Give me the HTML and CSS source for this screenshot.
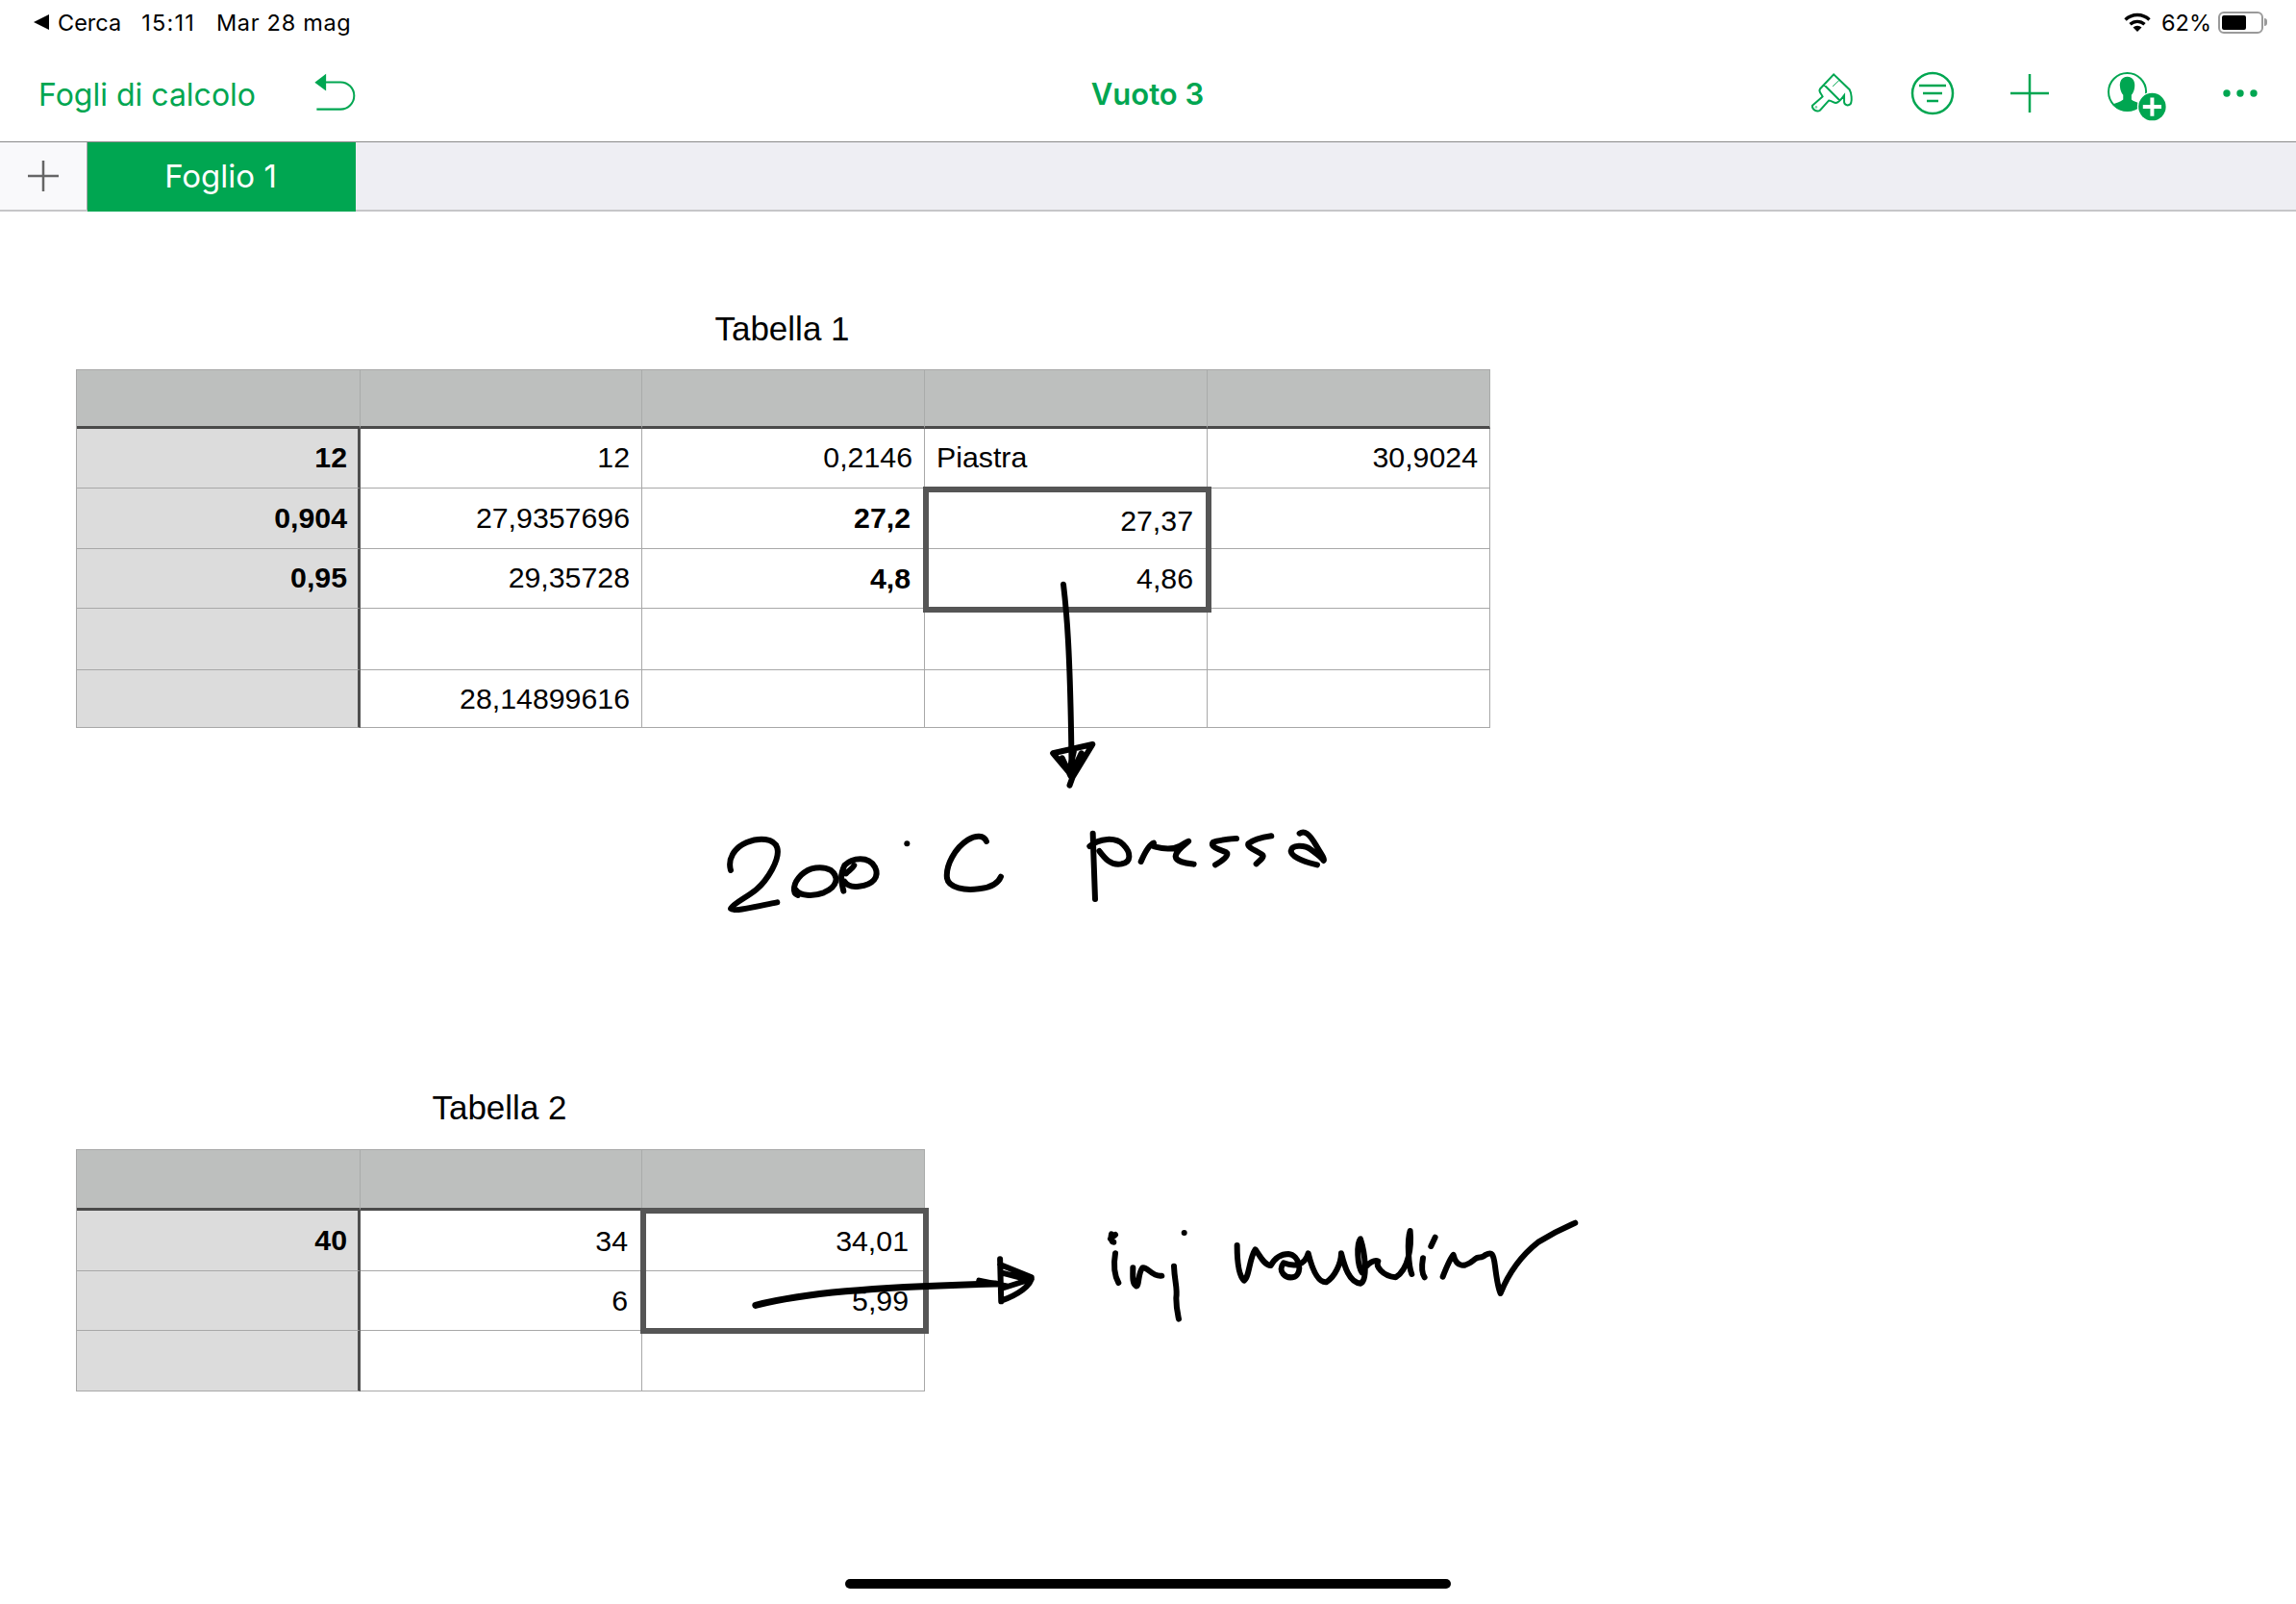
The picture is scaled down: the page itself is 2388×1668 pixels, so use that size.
FILE: index.html
```html
<!DOCTYPE html>
<html lang="it">
<head>
<meta charset="utf-8">
<title>Vuoto 3</title>
<link rel="stylesheet" href="styles.css">
</head>
<body>
<div class="status">
  <div class="status-left">
    <svg class="back-tri" viewBox="0 0 16 16"><path d="M16 0V16L0 8Z"/></svg>
    <span class="s-cerca">Cerca</span>
    <span class="s-time">15:11</span>
    <span class="s-date">Mar 28 mag</span>
  </div>
  <div class="status-right">
    <svg class="wifi" viewBox="0 0 28 20"><path class="wifi-arc" d="M1.5 7.5A18 18 0 0 1 26.5 7.5M6.5 12.3A11 11 0 0 1 21.500 12.300"/><path class="wifi-fill" d="M14 20L9.500 15.500A6.500 6.500 0 0 1 18.500 15.500Z"/></svg>
    <span class="s-pct">62%</span>
    <div class="battery"><div class="battery-body"><div class="battery-fill"></div></div><div class="battery-nub"></div></div>
  </div>
</div>

<header class="nav">
  <div class="nav-left">
    <span class="nav-link">Fogli di calcolo</span>
    <svg class="i-undo" viewBox="975 230 140 125"><path class="g-fill" d="M1017 235L982 262L1017 288Z"/><path class="g-line6" d="M1010 261H1062A42 42 0 0 1 1062 345H988"/></svg>
  </div>
  <div class="nav-title">Vuoto 3</div>
  <div class="nav-right">
    <svg class="i-brush" viewBox="40 45 140 130"><path class="g-line6" d="M72 98L115 52L165 100C172 112 172 135 170 140C168 152 150 152 148 140L148 118C140 128 132 140 122 142C115 142 108 134 100 134L72 165C62 172 46 162 48 150L80 122C76 112 66 105 72 98ZM85 85L135 135"/><path class="g-line3" d="M112 90L135 68"/><circle class="g-dot" cx="60" cy="155" r="4"/></svg>
    <svg class="i-filter" viewBox="0 0 46 46"><circle class="g-line2" cx="23" cy="23" r="21"/><path class="g-line2" d="M9 15H37M13 23H33M17 31H29"/></svg>
    <svg class="i-plus" viewBox="0 0 40 40"><path class="g-line2" d="M20 0V40M0 20H40"/></svg>
    <svg class="i-person" viewBox="60 40 190 160"><circle class="g-line6" cx="125" cy="108" r="59"/><path class="g-fill" d="M125 60C143 60 150 76 148 92C147 104 143 112 138 118V132C150 142 172 145 174 146C160 160 142 168 125 168C108 168 92 162 78 148C90 142 102 140 112 132V118C107 112 103 104 102 92C100 76 107 60 125 60Z"/><circle class="g-white" cx="203" cy="155" r="47"/><circle class="g-fill" cx="203" cy="155" r="43"/><path class="g-plus-w" d="M203 126V184M174 155H232"/></svg>
    <svg class="i-dots" viewBox="0 0 36 8"><circle class="g-fill" cx="4" cy="4" r="3.700"/><circle class="g-fill" cx="18" cy="4" r="3.700"/><circle class="g-fill" cx="32" cy="4" r="3.700"/></svg>
  </div>
</header>

<nav class="tabs">
  <div class="tab-add"><svg class="i-tabplus" viewBox="0 0 32 32"><path d="M16 0V32M0 16H32"/></svg></div>
  <div class="tab-active">Foglio 1</div>
</nav>

<main class="sheet">
  <section class="block block-1">
    <h2 class="tbl-title">Tabella 1</h2>
    <div class="grid grid-1">
      <div class="c h"></div><div class="c h"></div><div class="c h"></div><div class="c h"></div><div class="c h"></div>
      <div class="c rh">12</div><div class="c">12</div><div class="c">0,2146</div><div class="c left">Piastra</div><div class="c">30,9024</div>
      <div class="c rh">0,904</div><div class="c">27,9357696</div><div class="c b pad16">27,2</div><div class="c pad16 low">27,37</div><div class="c"></div>
      <div class="c rh">0,95</div><div class="c">29,35728</div><div class="c b pad16 low3">4,8</div><div class="c pad16 low3">4,86</div><div class="c"></div>
      <div class="c rh"></div><div class="c"></div><div class="c"></div><div class="c"></div><div class="c"></div>
      <div class="c rh"></div><div class="c low3">28,14899616</div><div class="c"></div><div class="c"></div><div class="c"></div>
      <div class="sel sel-1"></div>
    </div>
  </section>
  <section class="block block-2">
    <h2 class="tbl-title">Tabella 2</h2>
    <div class="grid grid-2">
      <div class="c h"></div><div class="c h"></div><div class="c h"></div>
      <div class="c rh">40</div><div class="c pad16 low2">34</div><div class="c pad17 low2">34,01</div>
      <div class="c rh"></div><div class="c pad16 low2">6</div><div class="c pad17 low2">5,99</div>
      <div class="c rh"></div><div class="c"></div><div class="c"></div>
      <div class="sel sel-2"></div>
    </div>
  </section>
</main>

<div class="home-wrap"><div class="home"></div></div>

<svg class="ink-layer" viewBox="0 0 2388 1668" role="img" aria-label="Appunti a mano: 200 °C pressa, inj moulding">
  <g transform="translate(900 420) scale(.4337 .3333)">
    <path class="ink" d="M475 563C482 640 492 760 495 1165"/>
    <path class="ink" d="M495 1160L450 1090L545 1062L497 1165L490 1190M472 1105L492 1160M518 1090L492 1160M500 1085L490 1140"/>
  </g>
  <g transform="translate(760 1240) scale(.574 .3333)">
    <path class="ink ink-heavy" d="M45 352C130 315 250 295 480 285"/>
    <path class="ink" d="M488 208L490 340M488 225L545 265C545 290 520 320 490 338M490 300L545 270M450 275L500 292M490 250L530 268"/>
  </g>
  <g transform="translate(740 850) scale(.3333)">
    <path class="ink" d="M60 165C50 130 70 95 110 78C150 62 195 65 205 95C215 130 175 195 140 225C110 250 65 270 60 285C70 295 130 280 205 265"/>
    <path class="ink" d="M270 243C250 235 255 205 280 180C305 155 345 150 372 165C398 185 395 215 350 235C315 248 275 245 262 225"/>
    <path class="ink" d="M412 230C405 200 400 180 415 150C440 125 490 120 510 155C525 185 505 210 460 215C440 218 425 215 415 200M420 175C430 165 440 160 445 150"/>
    <path class="ink" d="M610 82h.1"/>
    <path class="ink" d="M858 75C850 55 825 55 800 70C760 95 730 150 735 190C740 220 790 230 840 222C875 218 895 205 903 185"/>
  </g>
  <g transform="translate(1120 850) scale(.3333)">
    <path class="ink" d="M50 50C52 120 55 200 57 255"/>
    <path class="ink" d="M40 90C70 65 120 60 145 85C170 110 170 140 140 145C105 152 85 125 70 105"/>
    <path class="ink" d="M200 138C210 115 225 85 240 80C240 90 235 90 245 92C275 100 300 100 320 90C345 75 355 70 345 78C330 90 310 105 308 122C310 140 340 143 365 146"/>
    <path class="ink" d="M498 66C470 68 440 70 425 78C415 90 440 100 465 108C480 118 450 138 432 148"/>
    <path class="ink" d="M607 58C580 62 550 70 535 82C530 95 565 105 580 118C585 125 570 135 560 145"/>
    <path class="ink" d="M695 50C710 40 725 50 745 85C760 110 775 130 770 135C765 125 745 112 730 100C710 85 670 85 668 105C670 125 715 140 750 148"/>
  </g>
  <g transform="translate(1140 1260) scale(.3333)">
    <path class="ink" d="M48 70C45 80 48 95 55 95M60 72L45 85"/>
    <path class="ink" d="M60 130C55 160 55 195 70 222"/>
    <path class="ink" d="M115 175C115 200 112 225 125 232C135 235 130 190 145 175C160 170 175 205 205 200"/>
    <path class="ink" d="M275 66h.1"/>
    <path class="ink" d="M243 170C245 220 255 240 250 270C250 300 255 320 258 335"/>
    <path class="ink" d="M440 105C440 150 445 200 462 215C478 205 478 145 497 118C510 135 525 168 545 168C555 150 572 132 600 132C635 135 645 190 620 203C590 212 565 185 585 160C610 170 650 175 662 130C672 170 690 222 718 220C745 205 765 160 765 130C775 170 790 222 825 224C848 215 840 130 825 85C812 100 815 170 830 190C850 155 872 150 880 155C872 170 892 200 935 205C975 180 985 110 980 60C970 90 975 170 985 195"/>
    <path class="ink" d="M1020 145C1015 175 1018 195 1025 205"/>
    <path class="ink" d="M1058 80L1045 108"/>
    <path class="ink" d="M1082 203C1095 170 1105 145 1115 135C1125 175 1150 175 1180 150C1195 135 1200 150 1215 135C1235 125 1240 130 1245 170C1250 210 1255 240 1262 255C1280 210 1310 150 1380 95C1420 70 1460 50 1495 35"/>
  </g>
</svg>
</body>
</html>
```

FILE: styles.css
```css
* { box-sizing: border-box; }
html, body { margin: 0; padding: 0; }
body {
  position: relative;
  width: 2388px;
  height: 1668px;
  overflow: hidden;
  background: #fff;
  display: flex;
  flex-direction: column;
  font-family: Inter, "Liberation Sans", sans-serif;
  color: #000;
}

/* status bar */
.status {
  height: 46px;
  flex: none;
  display: flex;
  justify-content: space-between;
  align-items: center;
  padding: 0 30px 0 35px;
  font-size: 23.500px;
}
.status-left, .status-right { display: flex; align-items: center; }
.back-tri { width: 16px; height: 16px; margin-right: 9px; }
.s-cerca { margin-right: 21px; }
.s-time { margin-right: 22px; letter-spacing: 1.200px; }
.s-date { letter-spacing: .700px; }
.wifi { width: 28px; height: 20px; margin-right: 11px; }
.wifi-arc { fill: none; stroke: #000; stroke-width: 3.400; }
.wifi-fill { fill: #000; }
.s-pct { margin-right: 7px; }
.battery { display: flex; align-items: center; }
.battery-body {
  width: 47px;
  height: 23px;
  border: 2px solid #9a9a9a;
  border-radius: 6px;
  padding: 2px;
}
.battery-fill { width: 25px; height: 100%; background: #000; border-radius: 2px; }
.battery-nub { width: 3px; height: 8px; background: #9a9a9a; border-radius: 0 3px 3px 0; margin-left: 1px; }

/* nav */
.nav {
  height: 102px;
  flex: none;
  display: grid;
  grid-template-columns: 1fr auto 1fr;
  align-items: center;
  padding: 0 40px 0 40px;
  border-bottom: 1px solid #8a8a8a;
  color: #00a651;
}
.nav-left { display: flex; align-items: center; }
.nav-link { font-size: 32px; width: 285px; padding-top: 3px; }
.nav-title { font-size: 31px; font-weight: 600; padding: 1px 1px 0 0; }
.nav-right { display: flex; justify-content: flex-end; align-items: center; }
.i-undo { width: 47px; height: 42px; margin-top: -2px; }
.i-brush { width: 47px; height: 43px; margin-right: 58px; }
.i-filter { width: 46px; height: 46px; margin-right: 58px; }
.i-plus { width: 40px; height: 40px; margin-right: 60px; }
.i-person { width: 63px; height: 53px; margin-right: 58px; margin-top: 5px; }
.i-dots { width: 36px; height: 8px; }
.g-fill { fill: #00a651; }
.g-dot { fill: #7fd3a8; }
.g-white { fill: #fff; }
.g-line6 { fill: none; stroke: #00a651; stroke-width: 6; }
.g-line3 { fill: none; stroke: #00a651; stroke-width: 3; }
.g-line2 { fill: none; stroke: #00a651; stroke-width: 2.500; }
.g-plus-w { fill: none; stroke: #fff; stroke-width: 12; }

/* tabs */
.tabs {
  height: 72px;
  flex: none;
  display: flex;
  background: #eeeef3;
  border-bottom: 2px solid #c6c6c8;
}
.tab-add {
  width: 91px;
  background: #f9f9fb;
  border-right: 1px solid #a9a9ab;
  display: flex;
  align-items: center;
  justify-content: center;
}
.i-tabplus { width: 32px; height: 32px; }
.i-tabplus path { fill: none; stroke: #666; stroke-width: 2.500; }
.tab-active {
  width: 279px;
  height: 72px;
  padding: 0 2px 3px 0;
  background: #00a651;
  color: #fff;
  font-size: 33px;
  display: flex;
  align-items: center;
  justify-content: center;
}

/* sheet */
.sheet {
  flex: 1;
  padding-left: 79px;
  font-family: "Liberation Sans", Arial, sans-serif;
}
.block { width: max-content; }
.block-1 { margin-top: 102px; }
.block-2 { margin-top: 375px; }
.tbl-title {
  margin: 0 0 22px;
  padding-right: 2px;
  height: 40px;
  line-height: 40px;
  font-size: 35px;
  font-weight: 400;
  text-align: center;
}
.block-2 .tbl-title { margin-bottom: 23px; }
.grid {
  position: relative;
  display: grid;
  border-left: 1px solid #a8a8a8;
  border-top: 1px solid #a8a8a8;
}
.grid-1 {
  grid-template-columns: 295px 293px repeat(3, 294px);
  grid-template-rows: 61px 62px 63px 62px 64px 60px;
}
.grid-2 {
  grid-template-columns: 295px 293px 294px;
  grid-template-rows: 63px 63px 62px 63px;
}
.c {
  display: flex;
  align-items: center;
  justify-content: flex-end;
  padding: 0 12px;
  font-size: 30.300px;
  line-height: 1;
  background: #fff;
  border-right: 1px solid #a8a8a8;
  border-bottom: 1px solid #a8a8a8;
}
.h { background: #bdbfbe; border-right-color: #a9abaa; border-bottom: 3px solid #4a4a4a; }
.rh {
  background: #dcdcdc;
  font-weight: 700;
  padding-right: 11px;
  border-right: 3px solid #4f4f4f;
}
.left { justify-content: flex-start; }
.b { font-weight: 700; }
.pad16 { padding-right: 14px; }
.pad17 { padding-right: 16px; }
.low { padding-top: 6px; }
.low2 { padding-top: 2px; }
.low3 { padding-top: 2px; }
.sel {
  position: absolute;
  border: 6px solid #555;
}
.sel-1 { grid-column: 4 / 5; grid-row: 3 / 5; inset: -2px -4px -4px -2px; }
.sel-2 { grid-column: 3 / 4; grid-row: 2 / 4; inset: -3px -4px -3px -2px; }

/* home indicator */
.home-wrap {
  flex: none;
  display: flex;
  justify-content: center;
  padding-bottom: 16px;
}
.home { width: 630px; height: 10px; border-radius: 5px; background: #000; }

/* handwriting */
.ink-layer {
  position: absolute;
  left: 0;
  top: 0;
  width: 2388px;
  height: 1668px;
  pointer-events: none;
}
.ink {
  fill: none;
  stroke: #000;
  stroke-width: 6px;
  stroke-linecap: round;
  stroke-linejoin: round;
  vector-effect: non-scaling-stroke;
}
.ink-heavy { stroke-width: 7px; }
```
